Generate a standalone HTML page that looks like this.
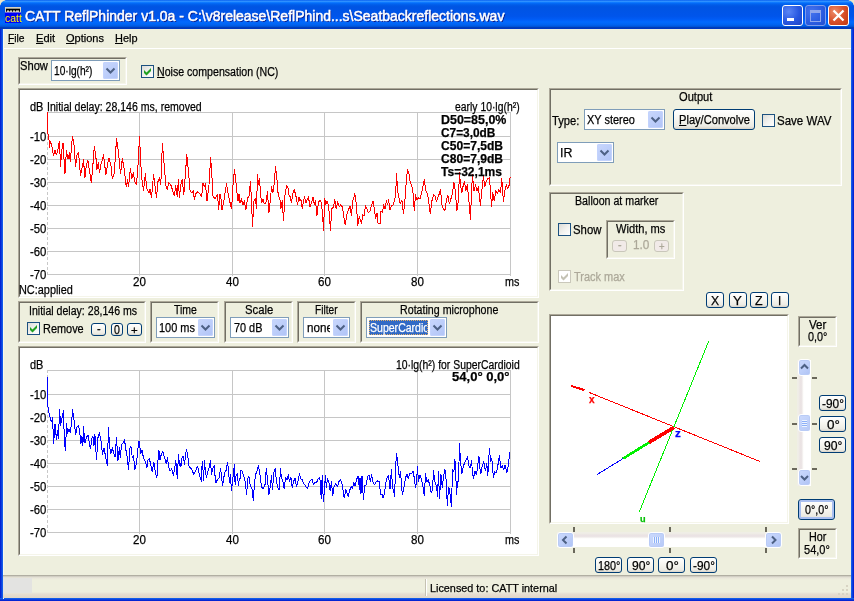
<!DOCTYPE html>
<html><head><meta charset="utf-8"><title>CATT ReflPhinder v1.0a</title>
<style>
html,body{margin:0;padding:0}
body{width:854px;height:601px;overflow:hidden;background:#EEEFDE;position:relative;font-family:"Liberation Sans",sans-serif}
#win{position:absolute;left:0;top:0;width:854px;height:601px;overflow:hidden;background:#EEEFDE}
#win div{position:absolute;box-sizing:border-box}
#title{left:0;top:0;width:854px;height:29px;background:linear-gradient(to bottom,#0058ee 0%,#3593ff 4%,#288eff 6%,#127dff 8%,#036ffc 10%,#0262ee 14%,#0057e5 20%,#0054e3 24%,#0055eb 56%,#005bf5 66%,#026afe 76%,#0062ef 86%,#0052d6 92%,#0040b8 94%,#0034c0 100%);border-radius:6px 6px 0 0}
#bl{left:0;top:29px;width:3px;height:572px;background:linear-gradient(to right,#0019cf 0,#0831d9 34%,#166aee 100%)}
#br{left:851px;top:29px;width:3px;height:572px;background:linear-gradient(to left,#0019cf 0,#0831d9 34%,#166aee 100%)}
#bb{left:0;top:598px;width:854px;height:3px;background:linear-gradient(to top,#0019cf 0,#0831d9 34%,#166aee 100%)}
.corner{width:5px;height:5px;background:radial-gradient(circle at 6px 6px,transparent 5.2px,#EFE6C8 6.2px)}
.grp{border:1px solid;border-color:#ACA899 #fff #fff #ACA899;background:#EEEFDE}
.grp::after{content:"";position:absolute;left:0;top:0;right:0;bottom:0;border:1px solid;border-color:#716F64 #F5F5EA #F5F5EA #716F64}
.grp.wht{background:#fff}
.combo{border:1px solid #7F9DB9;background:#fff}
.cbtn{width:15px;height:17px;border-radius:2px;background:linear-gradient(135deg,#C9D7FC 0%,#BDCEFA 50%,#B0C3F6 100%);box-shadow:inset 0 0 0 1px #C3D3FD}
.cbtn svg,.sbtn svg{position:absolute;left:0;top:0}
.btn{border:1px solid #003C74;border-radius:3px;background:linear-gradient(to bottom,#fff 0%,#F6F5EF 50%,#ECEBE4 85%,#D9D3C8 100%)}
.btn.sm{border-radius:3px}
.btn.foc{box-shadow:inset 0 0 0 2px #A9BFF0}
.btn.disb{border-color:#C9C7BA;background:#F1EAE8}
.cb{width:13px;height:13px;border:1px solid #1C5180;background:linear-gradient(135deg,#DCDCD7 0%,#F3F3F0 55%,#fff 100%);box-sizing:content-box !important}
.cb.dis{border-color:#CAC8BB;background:#fff}
.selbox{background:#316AC5;outline:1px dotted #E5B36A;outline-offset:-1px}
.vtrack{background:linear-gradient(to right,#F0EFE6 0,#EEEBE6 2px,#EAE2E3 3px,#ECE6E6 5px,#FBFAF8 6px,#fff 7px)}
.htrack{background:linear-gradient(to bottom,#F0EFE6 0,#EEEBE6 2px,#EAE2E3 3px,#ECE6E6 5px,#FBFAF8 6px,#fff 7px)}
.sbtn{border-radius:3px;border:1px solid #fff;background:linear-gradient(135deg,#CBD9FD 0%,#BFD0FA 50%,#AEC2F4 100%);box-shadow:inset 0 0 0 1px #B9CBF6}
.sbtn.thumb{background:linear-gradient(135deg,#CCDAFD,#B6C9F7)}
.gripv{left:3px;top:5px;width:5px;height:7px;background:repeating-linear-gradient(to bottom,#EEF4FE 0,#EEF4FE 1px,#8CB0F8 1px,#8CB0F8 2px)}
.griph{left:4px;top:4px;width:7px;height:6px;background:repeating-linear-gradient(to right,#EEF4FE 0,#EEF4FE 1px,#8CB0F8 1px,#8CB0F8 2px)}
.status{background:linear-gradient(to bottom,#9D9B8D 0,#C5C2B8 1px,#DEDBD0 2px,#E9E6DA 3px,#EEEFDE 5px,#EEEFDE 17px,#E6DED2 19px,#E0D6C6 23px)}
.capb{width:21px;height:21px;border:1px solid #fff;border-radius:3px;background:radial-gradient(circle at 30% 30%,#5B86F5 0%,#2857E0 55%,#1E43C4 100%)}
.capb.dim{border-color:#7F9CEB;background:radial-gradient(circle at 30% 30%,#4573EE 0%,#2A5BE0 60%,#224FD0 100%)}
.capb.cls{background:radial-gradient(circle at 30% 30%,#EE8C6A 0%,#D8512B 50%,#C1370F 100%)}
#txt{left:0;top:0;width:854px;height:601px;will-change:transform;isolation:isolate;opacity:0.999}
.t{position:absolute;white-space:pre;line-height:1;transform-origin:0 0;letter-spacing:0;-webkit-text-stroke:0.25px currentColor}
.t u{text-decoration:underline;text-decoration-thickness:1px;text-underline-offset:1px}
.nostroke{-webkit-text-stroke:0 !important}
.ttl{text-shadow:1px 1px 0 #0A1883;-webkit-text-stroke:0.5px #fff}
</style></head>
<body><div id="win">
<div id="title"></div>
<div id="bl"></div><div id="br"></div><div id="bb"></div>
<div class="corner" style="left:0;top:0"></div><div class="corner" style="left:849px;top:0;transform:scaleX(-1)"></div>
<svg id="icon" width="16" height="16" viewBox="0 0 16 16" style="position:absolute;left:5px;top:7px">
<rect width="16" height="16" fill="#0000F8"/><rect width="16" height="5.5" fill="#D6D2C2"/>
<rect x="1" y="1.7" width="14" height="1.7" fill="#000"/>
<path d="M1.5 3V4.7M4.5 3V4.4M7.5 3V4.7M10.5 3V4.4M14.5 3V4.7" stroke="#000" stroke-width="1" fill="none"/>
</svg>
<div class="capb" style="left:782px;top:5px"><div style="position:absolute;left:4px;top:12px;width:7px;height:3px;background:#fff"></div></div>
<div class="capb dim" style="left:805px;top:5px"><div style="position:absolute;left:4px;top:4px;width:9px;height:8px;border:1px solid #8FA6EC;border-top:3px solid #8FA6EC;box-sizing:content-box"></div></div>
<div class="capb cls" style="left:828px;top:5px"><svg width="21" height="21" viewBox="0 0 21 21" style="position:absolute;left:-1px;top:-1px"><path d="M5.5 5.5L15.5 15.5M15.5 5.5L5.5 15.5" stroke="#fff" stroke-width="2.3"/></svg></div>
<div class="" style="left:3px;top:29px;width:848px;height:19px;background:#EEEFDE"></div>
<div class="" style="left:3px;top:48px;width:848px;height:1px;background:#fff"></div>
<div class="" style="left:3px;top:29px;width:1px;height:570px;background:#F8F8EC"></div>
<div class="grp" style="left:18px;top:57px;width:109px;height:28px;"></div>
<div class="combo" style="left:51px;top:60px;width:69px;height:21px;"></div>
<div class="cbtn" style="left:103px;top:62px"><svg width="15" height="17" viewBox="0 0 15 17"><path d="M3.5 6.5 L7.5 10.5 L11.5 6.5" fill="none" stroke="#4D6185" stroke-width="2"/></svg></div>
<div class="cb" style="left:141px;top:65px;width:11px;height:11px;"><svg width="11" height="11" viewBox="0 0 11 11" style="position:absolute;left:0;top:0"><path d="M2 4 L4.5 6.5 L9 2 L9 5 L4.5 9.5 L2 7 Z" fill="#21A121"/></svg></div>
<div class="grp wht" style="left:18px;top:88px;width:521px;height:210px;"></div>
<div class="grp" style="left:18px;top:301px;width:128px;height:42px;"></div>
<div class="cb" style="left:27px;top:322px;width:11px;height:11px;"><svg width="11" height="11" viewBox="0 0 11 11" style="position:absolute;left:0;top:0"><path d="M2 4 L4.5 6.5 L9 2 L9 5 L4.5 9.5 L2 7 Z" fill="#21A121"/></svg></div>
<div class="btn sm" style="left:91px;top:323px;width:15px;height:13px;"></div>
<div class="btn sm" style="left:111px;top:323px;width:12px;height:13px;"></div>
<div class="btn sm" style="left:127px;top:323px;width:15px;height:13px;"></div>
<div class="grp" style="left:150px;top:301px;width:69px;height:42px;"></div>
<div class="combo" style="left:156px;top:317px;width:59px;height:21px;"></div>
<div class="cbtn" style="left:198px;top:319px"><svg width="15" height="17" viewBox="0 0 15 17"><path d="M3.5 6.5 L7.5 10.5 L11.5 6.5" fill="none" stroke="#4D6185" stroke-width="2"/></svg></div>
<div class="grp" style="left:224px;top:301px;width:69px;height:42px;"></div>
<div class="combo" style="left:230px;top:317px;width:59px;height:21px;"></div>
<div class="cbtn" style="left:272px;top:319px"><svg width="15" height="17" viewBox="0 0 15 17"><path d="M3.5 6.5 L7.5 10.5 L11.5 6.5" fill="none" stroke="#4D6185" stroke-width="2"/></svg></div>
<div class="grp" style="left:297px;top:301px;width:59px;height:42px;"></div>
<div class="combo" style="left:303px;top:317px;width:47px;height:21px;"></div>
<div class="cbtn" style="left:333px;top:319px"><svg width="15" height="17" viewBox="0 0 15 17"><path d="M3.5 6.5 L7.5 10.5 L11.5 6.5" fill="none" stroke="#4D6185" stroke-width="2"/></svg></div>
<div class="grp" style="left:360px;top:301px;width:179px;height:42px;"></div>
<div class="combo" style="left:366px;top:317px;width:81px;height:21px;"></div>
<div class="cbtn" style="left:430px;top:319px"><svg width="15" height="17" viewBox="0 0 15 17"><path d="M3.5 6.5 L7.5 10.5 L11.5 6.5" fill="none" stroke="#4D6185" stroke-width="2"/></svg></div>
<div class="selbox" style="left:369px;top:320px;width:59px;height:15px;"></div>
<div class="grp wht" style="left:18px;top:346px;width:521px;height:210px;"></div>
<div class="grp" style="left:549px;top:88px;width:293px;height:98px;"></div>
<div class="combo" style="left:584px;top:109px;width:81px;height:21px;"></div>
<div class="cbtn" style="left:648px;top:111px"><svg width="15" height="17" viewBox="0 0 15 17"><path d="M3.5 6.5 L7.5 10.5 L11.5 6.5" fill="none" stroke="#4D6185" stroke-width="2"/></svg></div>
<div class="btn" style="left:673px;top:109px;width:82px;height:21px;"></div>
<div class="cb" style="left:762px;top:114px;width:11px;height:11px;"></div>
<div class="combo" style="left:557px;top:142px;width:57px;height:21px;"></div>
<div class="cbtn" style="left:597px;top:144px"><svg width="15" height="17" viewBox="0 0 15 17"><path d="M3.5 6.5 L7.5 10.5 L11.5 6.5" fill="none" stroke="#4D6185" stroke-width="2"/></svg></div>
<div class="grp" style="left:549px;top:192px;width:135px;height:99px;"></div>
<div class="cb" style="left:558px;top:223px;width:11px;height:11px;"></div>
<div class="grp" style="left:606px;top:220px;width:69px;height:39px;"></div>
<div class="btn sm disb" style="left:612px;top:240px;width:15px;height:12px;"></div>
<div class="btn sm disb" style="left:654px;top:240px;width:15px;height:12px;"></div>
<div class="cb dis" style="left:558px;top:270px;width:11px;height:11px;"><svg width="11" height="11" viewBox="0 0 11 11" style="position:absolute;left:0;top:0"><path d="M2 4 L4.5 6.5 L9 2 L9 5 L4.5 9.5 L2 7 Z" fill="#C4C2B4"/></svg></div>
<div class="btn sm" style="left:706px;top:292px;width:18px;height:16px;"></div>
<div class="btn sm" style="left:729px;top:292px;width:18px;height:16px;"></div>
<div class="btn sm" style="left:750px;top:292px;width:18px;height:16px;"></div>
<div class="btn sm" style="left:771px;top:292px;width:18px;height:16px;"></div>
<div class="grp wht" style="left:549px;top:314px;width:240px;height:210px;"></div>
<svg width="236" height="206" viewBox="551 316 236 206" style="position:absolute;left:551px;top:316px" shape-rendering="crispEdges">
<line x1="589" y1="392.4" x2="760" y2="461.5" stroke="#FF0000" stroke-width="1"/>
<line x1="708.8" y1="341" x2="639.4" y2="511.6" stroke="#00F000" stroke-width="1"/>
<line x1="597.4" y1="474.4" x2="623" y2="458.6" stroke="#0000FF" stroke-width="1"/>
<line x1="623" y1="458.6" x2="649" y2="442.5" stroke="#00F000" stroke-width="2.6"/>
<line x1="649" y1="442.5" x2="674" y2="427.5" stroke="#FF0000" stroke-width="3.6"/>
<line x1="571" y1="385.8" x2="584.6" y2="390.2" stroke="#FF0000" stroke-width="2"/>
</svg>
<div class="grp" style="left:798px;top:316px;width:39px;height:31px;"></div>
<div class="grp" style="left:798px;top:528px;width:39px;height:31px;"></div>
<div class="vtrack" style="left:797px;top:360px;width:14px;height:126px;"></div>
<div class="sbtn" style="left:798px;top:359px;width:13px;height:17px"><svg width="11" height="15" viewBox="0 0 11 15"><path d="M2 8.5 L5.5 5 L9 8.5" fill="none" stroke="#4D6185" stroke-width="2"/></svg></div>
<div class="sbtn" style="left:798px;top:469px;width:13px;height:17px"><svg width="11" height="15" viewBox="0 0 11 15"><path d="M2 6 L5.5 9.5 L9 6" fill="none" stroke="#4D6185" stroke-width="2"/></svg></div>
<div class="sbtn thumb" style="left:798px;top:414px;width:13px;height:18px"><div class="gripv"></div></div>
<div class="" style="left:792px;top:377px;width:5px;height:2px;background:#6A685B"></div>
<div class="" style="left:812px;top:377px;width:5px;height:2px;background:#6A685B"></div>
<div class="" style="left:792px;top:423px;width:5px;height:2px;background:#6A685B"></div>
<div class="" style="left:812px;top:423px;width:5px;height:2px;background:#6A685B"></div>
<div class="" style="left:792px;top:468px;width:5px;height:2px;background:#6A685B"></div>
<div class="" style="left:812px;top:468px;width:5px;height:2px;background:#6A685B"></div>
<div class="btn sm" style="left:819px;top:395px;width:27px;height:16px;"></div>
<div class="btn sm" style="left:819px;top:416px;width:27px;height:16px;"></div>
<div class="btn sm" style="left:819px;top:437px;width:27px;height:16px;"></div>
<div class="btn foc" style="left:798px;top:499px;width:37px;height:21px;"></div>
<div class="htrack" style="left:557px;top:532px;width:224px;height:15px;"></div>
<div class="sbtn" style="left:557px;top:532px;width:17px;height:16px"><svg width="15" height="14" viewBox="0 0 15 14"><path d="M8.5 3.5 L5 7 L8.5 10.5" fill="none" stroke="#4D6185" stroke-width="2"/></svg></div>
<div class="sbtn" style="left:765px;top:532px;width:17px;height:16px"><svg width="15" height="14" viewBox="0 0 15 14"><path d="M6 3.5 L9.5 7 L6 10.5" fill="none" stroke="#4D6185" stroke-width="2"/></svg></div>
<div class="sbtn thumb" style="left:648px;top:532px;width:17px;height:16px"><div class="griph"></div></div>
<div class="" style="left:573px;top:527px;width:2px;height:5px;background:#6A685B"></div>
<div class="" style="left:573px;top:548px;width:2px;height:5px;background:#6A685B"></div>
<div class="" style="left:669px;top:527px;width:2px;height:5px;background:#6A685B"></div>
<div class="" style="left:669px;top:548px;width:2px;height:5px;background:#6A685B"></div>
<div class="" style="left:765px;top:527px;width:2px;height:5px;background:#6A685B"></div>
<div class="" style="left:765px;top:548px;width:2px;height:5px;background:#6A685B"></div>
<div class="btn sm" style="left:595px;top:557px;width:27px;height:16px;"></div>
<div class="btn sm" style="left:627px;top:557px;width:27px;height:16px;"></div>
<div class="btn sm" style="left:658px;top:557px;width:27px;height:16px;"></div>
<div class="btn sm" style="left:690px;top:557px;width:27px;height:16px;"></div>
<div class="status" style="left:3px;top:575px;width:848px;height:23px;"></div>
<div class="" style="left:3px;top:578px;width:29px;height:15px;background:#E3E3E1"></div>
<div class="" style="left:425px;top:579px;width:1px;height:17px;background:#C5C2B2"></div>
<div class="" style="left:426px;top:579px;width:1px;height:17px;background:#fff"></div>
<svg width="13" height="13" viewBox="0 0 13 13" style="position:absolute;left:837px;top:584px"><g fill="#D8D4C4"><rect x="9" y="1" width="2" height="2"/><rect x="5" y="5" width="2" height="2"/><rect x="9" y="5" width="2" height="2"/><rect x="1" y="9" width="2" height="2"/><rect x="5" y="9" width="2" height="2"/><rect x="9" y="9" width="2" height="2"/></g></svg>
<svg width="517" height="206" viewBox="20 90 517 206" style="position:absolute;left:20px;top:90px"><g stroke="#C6C6C6" stroke-width="1" shape-rendering="crispEdges"><line x1="47" y1="112.5" x2="511" y2="112.5"/><line x1="47" y1="136.5" x2="511" y2="136.5"/><line x1="47" y1="159.5" x2="511" y2="159.5"/><line x1="47" y1="182.5" x2="511" y2="182.5"/><line x1="47" y1="205.5" x2="511" y2="205.5"/><line x1="47" y1="228.5" x2="511" y2="228.5"/><line x1="47" y1="251.5" x2="511" y2="251.5"/><line x1="47" y1="274.5" x2="511" y2="274.5"/><line x1="139.5" y1="112" x2="139.5" y2="276"/><line x1="232.5" y1="112" x2="232.5" y2="276"/><line x1="324.5" y1="112" x2="324.5" y2="276"/><line x1="417.5" y1="112" x2="417.5" y2="276"/><line x1="510.5" y1="112" x2="510.5" y2="276"/></g><line x1="47.5" y1="112" x2="47.5" y2="276" stroke="#C8C8C8" stroke-width="1" stroke-dasharray="3,2" shape-rendering="crispEdges"/><polyline points="47.6,112.0 47.6,131.0 49.0,140.0 49.6,147.9 50.4,141.0 51.6,145.0 53.6,155.9 55.0,149.9 56.4,154.9 57.6,151.9 59.4,141.0 60.6,166.9 61.6,150.9 63.0,143.0 65.0,173.9 66.4,150.9 68.0,158.9 69.4,152.9 70.4,161.9 71.6,145.0 72.6,136.0 74.0,145.0 75.6,166.9 77.0,154.9 78.6,152.9 80.5,175.9 81.9,168.9 83.5,159.9 84.9,177.9 86.3,164.9 87.9,159.9 89.5,170.9 91.3,182.9 92.9,164.9 94.3,146.9 95.9,156.9 96.9,169.9 98.3,162.9 99.5,172.9 100.9,164.9 103.5,154.9 105.9,174.9 107.5,164.9 108.9,157.9 110.9,164.9 112.3,178.9 114.3,172.9 116.5,139.0 118.3,150.9 120.5,173.9 122.3,158.9 123.9,166.9 126.3,186.9 127.5,179.9 128.5,186.9 130.3,168.9 131.9,178.9 133.3,172.9 134.9,181.9 136.5,184.9 137.9,166.9 139.5,137.0 140.9,164.9 141.9,178.9 143.5,190.9 145.3,173.9 146.9,188.9 148.9,192.9 149.9,188.9 151.5,197.9 153.5,174.9 154.9,184.9 156.5,197.9 157.9,181.9 159.5,177.9 160.8,184.9 162.4,143.0 164.2,164.9 165.8,184.9 167.2,189.9 168.8,182.9 170.8,184.9 172.8,190.9 174.2,195.9 175.8,185.9 177.2,196.9 178.4,179.9 179.4,197.9 180.8,184.9 182.2,178.9 183.8,194.9 186.8,154.9 188.8,174.9 189.8,189.9 191.8,192.9 193.4,190.9 194.4,199.9 195.8,193.9 197.8,191.9 199.8,193.9 201.6,196.9 203.0,182.9 204.4,186.9 205.4,183.9 207.0,200.9 209.0,184.9 210.6,157.9 211.6,170.9 213.0,195.9 215.0,198.9 216.4,195.9 217.6,194.9 218.6,209.9 220.0,193.9 221.0,198.9 222.0,209.9 223.6,202.9 225.0,192.9 226.6,183.9 228.0,192.9 229.6,200.9 231.6,208.9 233.0,184.9 234.4,169.9 235.6,178.9 237.0,192.9 238.0,200.9 239.0,193.9 240.0,202.9 241.3,198.9 242.9,204.9 244.3,200.9 245.9,209.9 247.5,197.9 248.9,196.9 250.5,181.9 251.5,200.9 252.5,226.8 253.9,200.9 255.5,198.9 256.5,208.9 257.5,174.9 258.5,184.9 259.5,178.9 260.5,192.9 261.5,202.9 262.9,198.9 264.3,203.9 265.9,202.9 267.5,191.9 268.9,212.9 270.3,200.9 271.5,186.9 272.9,192.9 274.3,182.9 275.5,166.9 276.9,178.9 278.3,195.9 279.9,198.9 280.9,208.9 282.3,200.9 283.5,220.9 284.9,195.9 286.5,185.9 287.9,186.9 288.9,194.9 290.3,196.9 291.5,202.9 292.9,192.9 294.3,189.9 295.9,195.9 297.5,204.9 298.9,196.9 299.9,200.9 300.9,198.9 302.3,208.9 303.5,200.9 304.5,196.9 305.9,202.9 307.5,198.9 308.5,196.9 309.9,206.9 311.5,202.9 312.9,196.9 314.3,204.9 315.5,200.9 316.9,215.9 318.3,202.9 319.9,199.9 321.4,202.9 322.8,216.9 323.4,230.4 324.8,198.9 325.8,204.9 327.2,200.9 328.4,204.9 329.8,219.9 330.4,230.4 331.8,208.9 333.4,206.9 334.8,199.9 336.2,208.9 337.8,201.9 339.2,206.9 340.8,204.9 342.4,206.9 343.8,216.9 345.2,224.9 346.8,214.9 348.8,208.9 350.2,205.9 351.4,215.9 352.8,200.9 354.8,193.9 356.4,204.9 357.8,225.4 359.2,216.9 361.6,223.9 362.6,214.9 364.0,215.9 365.4,205.9 367.0,208.9 368.4,212.9 370.0,210.9 371.6,204.9 373.0,200.9 374.4,208.9 375.6,218.9 377.0,212.9 378.0,222.9 380.0,223.9 381.0,210.9 382.4,212.9 383.6,204.9 385.0,208.9 386.4,200.9 387.6,204.9 388.6,199.9 390.0,209.9 391.6,205.9 393.0,204.9 394.4,200.9 395.6,194.9 396.6,173.9 397.6,190.9 399.0,197.9 400.3,203.9 401.9,199.9 403.5,213.9 404.9,200.9 406.3,180.9 407.5,169.9 408.9,172.9 410.3,182.9 411.5,184.9 412.9,190.9 414.3,210.9 415.5,194.9 416.9,199.9 418.3,197.9 419.9,198.9 421.5,192.9 422.9,186.9 424.3,179.9 425.9,190.9 427.5,193.9 428.9,202.9 430.3,213.9 431.9,200.9 433.5,194.9 434.9,195.9 436.5,201.9 437.9,196.9 439.3,193.9 440.5,189.9 441.9,204.9 443.5,208.9 444.9,210.9 446.3,200.9 447.9,194.9 449.3,203.9 450.9,198.9 452.3,193.9 453.9,181.9 455.3,190.9 456.9,210.9 458.3,200.9 459.5,172.9 460.5,184.9 461.9,192.9 463.3,184.9 464.5,181.9 465.9,190.9 467.3,184.9 468.9,200.9 470.5,219.9 471.5,190.9 472.5,174.9 473.9,190.9 475.5,184.9 476.9,190.9 478.3,186.9 479.5,196.9 480.4,205.9 481.8,190.9 483.4,176.9 484.8,186.9 486.4,180.9 487.8,178.9 489.4,177.9 490.8,194.9 491.4,206.9 492.8,192.9 494.2,200.9 495.8,190.9 497.4,193.9 498.8,189.9 500.4,192.9 501.8,178.9 503.4,201.9 504.8,190.9 506.4,184.9 507.8,188.9 509.2,184.9 510.2,176.9" fill="none" stroke="#FF0000" stroke-width="1" stroke-linejoin="round" shape-rendering="crispEdges"/></svg>
<svg width="517" height="205" viewBox="20 348 517 205" style="position:absolute;left:20px;top:348px"><g stroke="#C6C6C6" stroke-width="1" shape-rendering="crispEdges"><line x1="47" y1="370.5" x2="511" y2="370.5"/><line x1="47" y1="394.5" x2="511" y2="394.5"/><line x1="47" y1="417.5" x2="511" y2="417.5"/><line x1="47" y1="440.5" x2="511" y2="440.5"/><line x1="47" y1="463.5" x2="511" y2="463.5"/><line x1="47" y1="486.5" x2="511" y2="486.5"/><line x1="47" y1="509.5" x2="511" y2="509.5"/><line x1="47" y1="532.5" x2="511" y2="532.5"/><line x1="139.5" y1="370" x2="139.5" y2="534"/><line x1="232.5" y1="370" x2="232.5" y2="534"/><line x1="324.5" y1="370" x2="324.5" y2="534"/><line x1="417.5" y1="370" x2="417.5" y2="534"/><line x1="510.5" y1="370" x2="510.5" y2="534"/></g><line x1="47.5" y1="370" x2="47.5" y2="534" stroke="#C8C8C8" stroke-width="1" stroke-dasharray="3,2" shape-rendering="crispEdges"/><polyline points="47.6,377.0 47.6,403.9 49.0,412.9 50.4,418.9 51.6,421.9 52.6,417.9 53.6,443.9 55.0,423.9 56.4,439.9 57.4,430.9 58.4,438.9 59.6,409.9 60.6,425.9 61.6,419.9 63.4,410.9 64.4,440.9 65.4,450.9 66.6,423.9 67.6,433.9 69.0,428.9 70.4,432.9 71.6,421.9 72.6,409.9 74.0,419.9 75.6,434.9 77.0,426.9 78.6,425.9 79.6,430.9 80.9,443.9 81.9,435.9 82.9,445.9 83.5,426.9 84.9,442.9 86.3,437.9 87.9,434.9 89.5,443.9 90.5,448.9 91.9,437.9 92.9,435.9 93.9,445.9 94.9,433.9 96.5,459.9 97.9,437.9 99.3,432.9 100.9,439.9 102.5,454.9 103.9,447.9 105.5,455.9 107.3,465.9 108.5,427.9 109.5,445.9 110.9,453.9 112.3,447.9 113.9,453.9 115.1,456.9 116.5,437.9 117.9,460.9 119.3,447.9 120.3,457.9 121.5,444.9 122.9,442.9 124.5,439.9 125.9,449.9 127.3,457.9 128.5,469.9 129.9,447.9 130.9,445.9 132.3,457.9 133.5,455.9 134.9,469.9 136.3,463.9 137.5,453.9 138.5,441.9 139.5,441.9 140.5,453.9 141.9,449.9 143.5,457.9 145.5,461.9 146.9,467.9 147.9,459.9 149.5,458.9 150.9,465.9 152.3,471.9 153.9,461.9 155.5,473.9 156.9,477.9 157.9,461.9 158.9,449.9 159.9,459.9 161.4,453.9 162.8,451.9 164.4,456.9 166.2,463.9 167.4,457.9 168.8,467.9 170.2,470.9 171.8,468.9 173.4,475.9 174.4,469.9 175.8,460.9 177.4,478.9 178.4,454.9 179.8,465.9 180.0,463.5 181.0,466.5 182.2,456.5 183.5,456.5 184.0,461.0 184.5,464.5 185.5,455.0 186.5,450.0 187.5,454.5 188.5,461.0 189.0,466.0 190.5,468.0 192.5,470.4 193.5,474.4 195.5,470.9 197.5,466.5 198.5,469.0 199.5,475.9 200.5,478.4 201.5,481.4 202.2,461.5 203.0,469.9 203.5,480.4 204.5,460.5 205.5,472.9 206.5,477.4 207.5,472.9 208.5,469.0 209.4,467.0 210.4,460.5 211.1,469.0 211.7,474.4 212.4,469.0 214.4,465.5 215.4,481.9 216.4,482.4 217.4,479.4 219.4,477.4 220.4,468.5 221.4,473.9 222.4,485.4 223.4,480.9 224.4,473.9 225.4,470.9 226.4,469.9 227.4,462.5 228.4,468.0 229.4,482.9 230.4,474.4 231.4,490.4 232.4,482.9 233.4,472.9 234.4,464.5 235.1,484.4 235.9,475.9 237.4,473.9 238.4,485.4 239.4,478.9 240.0,478.9 240.9,469.9 242.5,471.9 244.3,477.9 245.5,482.9 246.5,494.9 247.9,477.9 248.9,475.9 250.3,485.9 251.9,487.9 253.3,500.9 254.5,481.9 255.9,473.9 257.3,469.9 258.5,465.9 259.9,473.9 261.5,486.9 262.9,488.9 264.9,485.9 266.3,468.9 267.5,479.9 268.9,494.9 270.3,485.9 271.5,475.9 272.5,489.9 273.9,471.9 275.3,468.9 276.5,481.9 277.9,487.9 279.3,489.9 280.5,468.9 281.5,477.9 282.9,481.9 284.3,488.9 285.5,477.9 286.9,479.9 288.3,474.9 289.5,481.9 290.9,476.9 292.3,487.9 293.5,481.9 294.9,477.9 296.5,486.9 297.9,481.9 299.5,473.9 300.9,478.9 302.3,479.9 303.9,483.9 305.5,485.9 307.5,488.9 308.9,482.9 310.3,480.9 311.9,478.9 313.5,484.9 314.9,481.9 316.5,482.9 317.9,478.9 319.5,477.9 320.4,481.9 321.2,498.9 322.2,475.9 323.4,501.9 324.4,489.9 325.4,475.9 326.4,487.9 327.4,478.9 328.8,481.9 330.2,490.9 331.4,481.9 332.8,495.9 334.2,485.9 335.8,483.9 337.4,486.9 338.8,481.9 340.8,479.9 342.4,485.9 344.2,497.9 345.8,489.9 347.4,493.9 348.2,496.9 349.8,489.9 351.2,486.9 352.4,488.9 353.8,482.9 355.2,485.9 356.4,479.9 358.2,475.9 359.4,489.9 360.0,477.9 361.0,493.9 362.0,475.9 363.4,499.9 364.6,485.9 366.0,484.9 367.6,476.9 369.0,474.9 370.4,481.9 371.6,474.9 373.0,481.9 374.4,484.9 376.0,481.9 377.6,480.9 379.4,481.9 380.6,494.9 382.0,493.9 383.0,497.9 384.4,493.9 386.0,481.9 387.4,476.9 388.6,475.9 390.0,488.9 391.4,469.9 392.6,487.9 393.6,489.9 394.6,496.9 395.6,465.9 396.6,453.9 398.0,465.9 399.4,477.9 400.5,471.9 402.3,494.9 403.9,487.9 405.5,477.9 406.9,473.9 408.3,478.9 409.9,472.9 411.5,473.9 412.9,470.9 414.3,477.9 415.5,487.9 416.5,481.9 417.5,466.9 418.5,481.9 419.9,474.9 421.5,479.9 422.9,485.9 424.3,495.9 425.5,473.9 426.9,481.9 428.3,479.9 429.9,485.9 431.3,492.9 432.5,489.9 433.5,470.9 434.9,481.9 436.5,485.9 437.5,496.9 438.5,471.9 439.5,498.9 440.9,473.9 442.3,487.9 443.5,476.9 444.9,468.9 446.3,481.9 447.3,505.9 448.5,487.9 449.5,488.9 450.5,497.9 451.5,506.9 452.5,469.9 453.9,471.9 454.9,458.9 455.9,477.9 456.5,494.9 457.5,481.9 458.5,480.9 459.5,443.9 460.5,461.9 461.9,473.9 463.5,465.9 464.9,461.9 466.3,459.9 467.5,456.9 468.9,465.9 470.3,467.9 471.5,460.9 472.5,471.9 473.5,478.9 474.9,470.9 476.5,474.9 477.9,463.9 478.9,455.9 479.9,467.9 480.8,473.9 482.2,465.9 483.8,461.9 485.4,470.9 486.8,463.9 487.8,475.9 489.4,448.9 490.8,461.9 491.8,458.9 493.4,477.9 494.8,471.9 496.4,472.9 497.8,465.9 499.4,455.9 500.8,467.9 502.2,465.9 503.8,469.9 505.2,464.9 506.8,472.9 508.2,465.9 509.8,451.9" fill="none" stroke="#0000FF" stroke-width="1" stroke-linejoin="round" shape-rendering="crispEdges"/></svg>
<div id="txt">
<span id="t0" class="t nostroke" style="font-size:10.5px;color:#FFFF00;left:4.70px;top:13.40px;transform:scaleX(0.9919);">catt</span>
<span id="t1" class="t ttl" style="font-size:14px;color:#fff;left:25.30px;top:9.00px;transform:scaleX(0.9996);">CATT ReflPhinder v1.0a - C:\v8release\ReflPhind...s\Seatbackreflections.wav</span>
<span id="t2" class="t" style="font-size:11.2px;color:#000;left:8.00px;top:33.00px;transform:scaleX(0.9198);"><u>F</u>ile</span>
<span id="t3" class="t" style="font-size:11.2px;color:#000;left:36.10px;top:33.00px;transform:scaleX(0.9898);"><u>E</u>dit</span>
<span id="t4" class="t" style="font-size:11.2px;color:#000;left:66.00px;top:33.00px;transform:scaleX(0.9854);"><u>O</u>ptions</span>
<span id="t5" class="t" style="font-size:11.2px;color:#000;left:114.50px;top:33.00px;transform:scaleX(0.9769);"><u>H</u>elp</span>
<span id="t6" class="t" style="font-size:12.5px;color:#000;left:20.00px;top:60.00px;transform:scaleX(0.8919);">Show</span>
<span id="t7" class="t" style="font-size:12.5px;color:#000;left:54.30px;top:65.00px;transform:scaleX(0.8127);">10·lg(h²)</span>
<span id="t8" class="t" style="font-size:12.5px;color:#000;left:156.80px;top:66.00px;transform:scaleX(0.8482);"><u>N</u>oise compensation (NC)</span>
<span id="t9" class="t" style="font-size:12.5px;color:#000;left:28.60px;top:305.00px;transform:scaleX(0.8455);">Initial delay: 28,146 ms</span>
<span id="t10" class="t" style="font-size:12.5px;color:#000;left:43.00px;top:323.00px;transform:scaleX(0.8744);">Remove</span>
<span id="t11" class="t" style="font-size:12.5px;color:#000;left:97.40px;top:323.00px;transform:scaleX(0.8869);">-</span>
<span id="t12" class="t" style="font-size:12.5px;color:#000;left:114.00px;top:323.60px;transform:scaleX(0.8485);">0</span>
<span id="t13" class="t" style="font-size:10.5px;color:#000;left:131.40px;top:324.70px;transform:scaleX(1.0911);">+</span>
<span id="t14" class="t" style="font-size:12.5px;color:#000;left:173.60px;top:303.50px;transform:scaleX(0.8380);">Time</span>
<span id="t15" class="t" style="font-size:12.5px;color:#000;left:159.30px;top:322.00px;transform:scaleX(0.8756);">100 ms</span>
<span id="t16" class="t" style="font-size:12.5px;color:#000;left:244.80px;top:303.50px;transform:scaleX(0.9047);">Scale</span>
<span id="t17" class="t" style="font-size:12.5px;color:#000;left:233.80px;top:322.00px;transform:scaleX(0.8692);">70 dB</span>
<span id="t18" class="t" style="font-size:12.5px;color:#000;left:315.00px;top:303.50px;transform:scaleX(0.8099);">Filter</span>
<div style="left:304px;top:319px;width:26px;height:17px;overflow:hidden"><span id="t19" class="t" style="font-size:12.5px;color:#000;left:2.80px;top:3.00px;transform:scaleX(0.9312);">none</span></div>
<span id="t20" class="t" style="font-size:12.5px;color:#000;left:400.30px;top:303.50px;transform:scaleX(0.8530);">Rotating microphone</span>
<div style="left:369px;top:320px;width:58px;height:15px;overflow:hidden"><span id="t21" class="t" style="font-size:12.5px;color:#fff;left:0.80px;top:2.00px;transform:scaleX(0.8433);">SuperCardioid</span></div>
<span id="t22" class="t" style="font-size:12.5px;color:#000;left:679.30px;top:91.00px;transform:scaleX(0.8899);">Output</span>
<span id="t23" class="t" style="font-size:12.5px;color:#000;left:552.30px;top:114.50px;transform:scaleX(0.8961);">Type:</span>
<span id="t24" class="t" style="font-size:12.5px;color:#000;left:586.80px;top:114.00px;transform:scaleX(0.8761);">XY stereo</span>
<span id="t25" class="t" style="font-size:12.5px;color:#000;left:678.70px;top:113.70px;transform:scaleX(0.8884);"><u>P</u>lay/Convolve</span>
<span id="t26" class="t" style="font-size:12.5px;color:#000;left:777.30px;top:115.00px;transform:scaleX(0.9213);">Save WAV</span>
<span id="t27" class="t" style="font-size:12.5px;color:#000;left:560.30px;top:147.00px;transform:scaleX(0.9920);">IR</span>
<span id="t28" class="t" style="font-size:12.5px;color:#000;left:574.90px;top:195.00px;transform:scaleX(0.8513);">Balloon at marker</span>
<span id="t29" class="t" style="font-size:12.5px;color:#000;left:573.30px;top:224.00px;transform:scaleX(0.9079);">Show</span>
<span id="t30" class="t" style="font-size:12.5px;color:#000;left:616.30px;top:223.00px;transform:scaleX(0.8891);">Width, ms</span>
<span id="t31" class="t" style="font-size:12.5px;color:#ACA899;left:618.30px;top:239.00px;transform:scaleX(0.8629);">-</span>
<span id="t32" class="t" style="font-size:12.5px;color:#ACA899;left:633.30px;top:239.40px;transform:scaleX(0.9430);">1.0</span>
<span id="t33" class="t" style="font-size:10.5px;color:#ACA899;left:659.10px;top:240.70px;transform:scaleX(0.9120);">+</span>
<span id="t34" class="t" style="font-size:12.5px;color:#ACA899;left:574.30px;top:270.60px;transform:scaleX(0.8778);">Track max</span>
<span id="t35" class="t" style="font-size:12.5px;color:#000;left:710.70px;top:295.00px;transform:scaleX(0.9708);">X</span>
<span id="t36" class="t" style="font-size:12.5px;color:#000;left:733.10px;top:295.00px;transform:scaleX(1.0547);">Y</span>
<span id="t37" class="t" style="font-size:12.5px;color:#000;left:754.70px;top:295.00px;transform:scaleX(0.9947);">Z</span>
<span id="t38" class="t" style="font-size:12.5px;color:#000;left:778.10px;top:295.00px;transform:scaleX(0.9184);">I</span>
<span id="t39" class="t" style="font-size:10px;color:#FF0000;font-weight:bold;left:588.70px;top:395.00px;transform:scaleX(1.0067);">x</span>
<span id="t40" class="t" style="font-size:10px;color:#0000FF;font-weight:bold;left:675.10px;top:429.00px;transform:scaleX(1.1600);">z</span>
<span id="t41" class="t" style="font-size:9px;color:#00C000;font-weight:bold;left:639.70px;top:515.00px;transform:scaleX(1.0182);">u</span>
<span id="t42" class="t" style="font-size:12.5px;color:#000;left:809.30px;top:319.40px;transform:scaleX(0.9272);">Ver</span>
<span id="t43" class="t" style="font-size:12.5px;color:#000;left:807.80px;top:331.20px;transform:scaleX(0.8664);">0,0°</span>
<span id="t44" class="t" style="font-size:12.5px;color:#000;left:809.30px;top:531.40px;transform:scaleX(0.8633);">Hor</span>
<span id="t45" class="t" style="font-size:12.5px;color:#000;left:804.30px;top:544.40px;transform:scaleX(0.8831);">54,0°</span>
<span id="t46" class="t" style="font-size:12.5px;color:#000;left:821.80px;top:397.50px;transform:scaleX(0.9490);">-90°</span>
<span id="t47" class="t" style="font-size:12.5px;color:#000;left:826.80px;top:418.50px;transform:scaleX(1.0792);">0°</span>
<span id="t48" class="t" style="font-size:12.5px;color:#000;left:823.80px;top:439.50px;transform:scaleX(0.9732);">90°</span>
<span id="t49" class="t" style="font-size:12.5px;color:#000;left:805.30px;top:504.00px;transform:scaleX(0.8548);">0°,0°</span>
<span id="t50" class="t" style="font-size:12.5px;color:#000;left:597.80px;top:559.50px;transform:scaleX(0.8662);">180°</span>
<span id="t51" class="t" style="font-size:12.5px;color:#000;left:631.80px;top:559.50px;transform:scaleX(0.9732);">90°</span>
<span id="t52" class="t" style="font-size:12.5px;color:#000;left:665.80px;top:559.50px;transform:scaleX(1.0792);">0°</span>
<span id="t53" class="t" style="font-size:12.5px;color:#000;left:692.80px;top:559.50px;transform:scaleX(0.9490);">-90°</span>
<span id="t54" class="t" style="font-size:11.2px;color:#000;left:429.90px;top:582.50px;transform:scaleX(0.9679);">Licensed to: CATT internal</span>
<span id="t55" class="t" style="font-size:12.5px;color:#000;left:29.80px;top:100.80px;transform:scaleX(0.8760);">dB</span>
<span id="t56" class="t" style="font-size:12.5px;color:#000;left:46.80px;top:100.80px;transform:scaleX(0.8433);">Initial delay: 28,146 ms, removed</span>
<span id="t57" class="t" style="font-size:12.5px;color:#000;left:29.80px;top:131.00px;transform:scaleX(0.9072);">-10</span>
<span id="t58" class="t" style="font-size:12.5px;color:#000;left:29.80px;top:154.00px;transform:scaleX(0.9072);">-20</span>
<span id="t59" class="t" style="font-size:12.5px;color:#000;left:29.80px;top:177.00px;transform:scaleX(0.9072);">-30</span>
<span id="t60" class="t" style="font-size:12.5px;color:#000;left:29.80px;top:200.00px;transform:scaleX(0.9072);">-40</span>
<span id="t61" class="t" style="font-size:12.5px;color:#000;left:29.80px;top:223.00px;transform:scaleX(0.9072);">-50</span>
<span id="t62" class="t" style="font-size:12.5px;color:#000;left:29.80px;top:246.00px;transform:scaleX(0.9072);">-60</span>
<span id="t63" class="t" style="font-size:12.5px;color:#000;left:29.80px;top:269.00px;transform:scaleX(0.9072);">-70</span>
<span id="t64" class="t" style="font-size:12.5px;color:#000;left:133.00px;top:276.00px;transform:scaleX(0.9276);">20</span>
<span id="t65" class="t" style="font-size:12.5px;color:#000;left:226.00px;top:276.00px;transform:scaleX(0.9276);">40</span>
<span id="t66" class="t" style="font-size:12.5px;color:#000;left:318.00px;top:276.00px;transform:scaleX(0.9276);">60</span>
<span id="t67" class="t" style="font-size:12.5px;color:#000;left:411.00px;top:276.00px;transform:scaleX(0.9276);">80</span>
<span id="t68" class="t" style="font-size:12.5px;color:#000;left:505.30px;top:276.00px;transform:scaleX(0.8637);">ms</span>
<span id="t69" class="t" style="font-size:12.5px;color:#000;left:19.30px;top:284.00px;transform:scaleX(0.8716);">NC:applied</span>
<span id="t70" class="t" style="font-size:12.5px;color:#000;left:455.10px;top:101.00px;transform:scaleX(0.8302);">early 10·lg(h²)</span>
<span id="t71" class="t" style="font-size:12.5px;color:#000;font-weight:bold;left:441.30px;top:114.00px;transform:scaleX(0.9956);">D50=85,0%</span>
<span id="t72" class="t" style="font-size:12.5px;color:#000;font-weight:bold;left:441.30px;top:127.00px;transform:scaleX(0.9489);">C7=3,0dB</span>
<span id="t73" class="t" style="font-size:12.5px;color:#000;font-weight:bold;left:441.30px;top:140.00px;transform:scaleX(0.9661);">C50=7,5dB</span>
<span id="t74" class="t" style="font-size:12.5px;color:#000;font-weight:bold;left:441.30px;top:153.00px;transform:scaleX(0.9661);">C80=7,9dB</span>
<span id="t75" class="t" style="font-size:12.5px;color:#000;font-weight:bold;left:441.30px;top:166.00px;transform:scaleX(0.9628);">Ts=32,1ms</span>
<span id="t76" class="t" style="font-size:12.5px;color:#000;left:29.80px;top:358.70px;transform:scaleX(0.8760);">dB</span>
<span id="t77" class="t" style="font-size:12.5px;color:#000;left:29.80px;top:389.00px;transform:scaleX(0.9072);">-10</span>
<span id="t78" class="t" style="font-size:12.5px;color:#000;left:29.80px;top:412.00px;transform:scaleX(0.9072);">-20</span>
<span id="t79" class="t" style="font-size:12.5px;color:#000;left:29.80px;top:435.00px;transform:scaleX(0.9072);">-30</span>
<span id="t80" class="t" style="font-size:12.5px;color:#000;left:29.80px;top:458.00px;transform:scaleX(0.9072);">-40</span>
<span id="t81" class="t" style="font-size:12.5px;color:#000;left:29.80px;top:481.00px;transform:scaleX(0.9072);">-50</span>
<span id="t82" class="t" style="font-size:12.5px;color:#000;left:29.80px;top:504.00px;transform:scaleX(0.9072);">-60</span>
<span id="t83" class="t" style="font-size:12.5px;color:#000;left:29.80px;top:527.00px;transform:scaleX(0.9072);">-70</span>
<span id="t84" class="t" style="font-size:12.5px;color:#000;left:133.00px;top:534.00px;transform:scaleX(0.9276);">20</span>
<span id="t85" class="t" style="font-size:12.5px;color:#000;left:226.00px;top:534.00px;transform:scaleX(0.9276);">40</span>
<span id="t86" class="t" style="font-size:12.5px;color:#000;left:318.00px;top:534.00px;transform:scaleX(0.9276);">60</span>
<span id="t87" class="t" style="font-size:12.5px;color:#000;left:411.00px;top:534.00px;transform:scaleX(0.9276);">80</span>
<span id="t88" class="t" style="font-size:12.5px;color:#000;left:505.30px;top:534.00px;transform:scaleX(0.8637);">ms</span>
<span id="t89" class="t" style="font-size:12.5px;color:#000;left:396.00px;top:358.70px;transform:scaleX(0.8319);">10·lg(h²) for SuperCardioid</span>
<span id="t90" class="t" style="font-size:12.5px;color:#000;font-weight:bold;left:452.10px;top:371.00px;transform:scaleX(1.0437);">54,0° 0,0°</span>
</div>
</div></body></html>
